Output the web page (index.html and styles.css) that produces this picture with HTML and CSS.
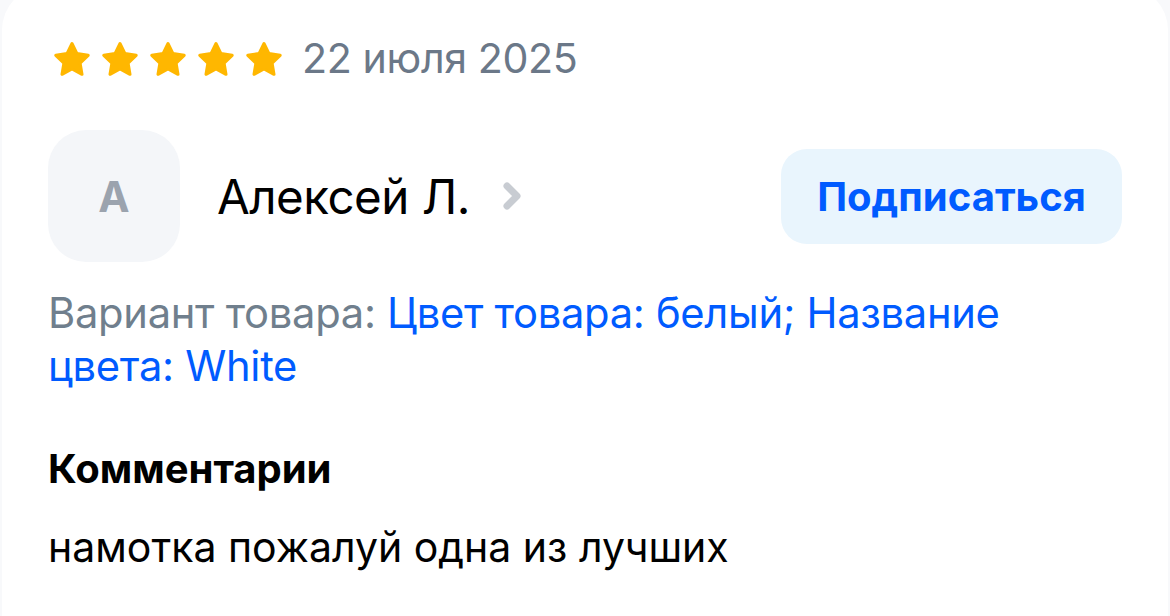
FILE: index.html
```html
<!DOCTYPE html>
<html lang="ru">
<head>
<meta charset="utf-8">
<link rel="stylesheet" href="styles.css">
</head>
<body>
<div class="card">
  <div class="rating-row">
    <div class="stars">
      <svg class="star" viewBox="0 0 36 36"><path d="M18 2.5 L23 12.6 L34.2 14.3 L26.1 22.1 L28 33.3 L18 28 L8 33.3 L9.9 22.1 L1.8 14.3 L13 12.6 Z"/></svg>
      <svg class="star" viewBox="0 0 36 36"><path d="M18 2.5 L23 12.6 L34.2 14.3 L26.1 22.1 L28 33.3 L18 28 L8 33.3 L9.9 22.1 L1.8 14.3 L13 12.6 Z"/></svg>
      <svg class="star" viewBox="0 0 36 36"><path d="M18 2.5 L23 12.6 L34.2 14.3 L26.1 22.1 L28 33.3 L18 28 L8 33.3 L9.9 22.1 L1.8 14.3 L13 12.6 Z"/></svg>
      <svg class="star" viewBox="0 0 36 36"><path d="M18 2.5 L23 12.6 L34.2 14.3 L26.1 22.1 L28 33.3 L18 28 L8 33.3 L9.9 22.1 L1.8 14.3 L13 12.6 Z"/></svg>
      <svg class="star" viewBox="0 0 36 36"><path d="M18 2.5 L23 12.6 L34.2 14.3 L26.1 22.1 L28 33.3 L18 28 L8 33.3 L9.9 22.1 L1.8 14.3 L13 12.6 Z"/></svg>
    </div>
    <span class="date">22 июля 2025</span>
  </div>

  <div class="author-row">
    <div class="author">
      <div class="avatar">А</div>
      <span class="name">Алексей Л.</span>
      <svg class="chevron" viewBox="0 0 22 32"><path d="M5 6 L15 16 L5 26"/></svg>
    </div>
    <button class="subscribe">Подписаться</button>
  </div>

  <p class="variant"><span class="variant-label">Вариант товара: </span><span class="variant-value">Цвет товара: белый; Название цвета: White</span></p>

  <h3 class="comment-title">Комментарии</h3>
  <p class="comment-text">намотка пожалуй одна из лучших</p>
</div>
</body>
</html>
```

FILE: styles.css
```css
* { box-sizing: border-box; }
html, body {
  margin: 0;
  padding: 0;
  background: #f8f9fb;
  height: 100%;
  overflow: hidden;
}
body {
  font-family: Inter, "Noto Sans", "Liberation Sans", sans-serif;
  color: #001a34;
}
.card {
  margin: -14px 2px 0;
  background: #ffffff;
  border-radius: 44px;
  padding: 51px 46px 60px 46px;
  min-height: 700px;
}
.rating-row {
  display: flex;
  align-items: center;
  gap: 20px;
  height: 42px;
}
.stars {
  display: flex;
  gap: 12px;
  margin-left: 6px;
  margin-top: 2px;
}
.star {
  width: 36px;
  height: 36px;
  display: block;
}
.star path {
  fill: #ffb700;
  stroke: #ffb700;
  stroke-width: 3;
  stroke-linejoin: round;
}
.date {
  font-size: 41.2px;
  color: #6b7888;
  letter-spacing: -0.4px;
}
.author-row {
  display: flex;
  align-items: center;
  justify-content: space-between;
  margin-top: 51px;
}
.author {
  display: flex;
  align-items: center;
}
.avatar {
  width: 132px;
  height: 132px;
  border-radius: 38px;
  background: #f4f6f9;
  color: #9ba3ae;
  font-weight: 700;
  font-size: 42px;
  display: flex;
  align-items: center;
  justify-content: center;
}
.name {
  margin-left: 37px;
  font-size: 47.5px;
  color: #000000;
  letter-spacing: -0.5px;
}
.chevron {
  width: 22px;
  height: 32px;
  margin-left: 32px;
}
.chevron path {
  fill: none;
  stroke: #c8ccd2;
  stroke-width: 7;
  stroke-linecap: round;
  stroke-linejoin: round;
}
.subscribe {
  border: none;
  background: #e9f5fd;
  color: #005bff;
  font-family: inherit;
  font-weight: 700;
  font-size: 40px;
  height: 95px;
  width: 341px;
  border-radius: 26px;
  padding: 0;
}
.variant {
  margin: 25px 0 0;
  font-size: 41.7px;
  line-height: 53px;
  letter-spacing: -0.3px;
  max-width: 1010px;
}
.variant-label { color: #707f8d; }
.variant-value { color: #005bff; }
.comment-title {
  margin: 51px 0 0;
  font-size: 40px;
  font-weight: 700;
  line-height: 50px;
  color: #000000;
}
.comment-text {
  margin: 28px 0 0;
  font-size: 41px;
  line-height: 50px;
  color: #000000;
}
```
